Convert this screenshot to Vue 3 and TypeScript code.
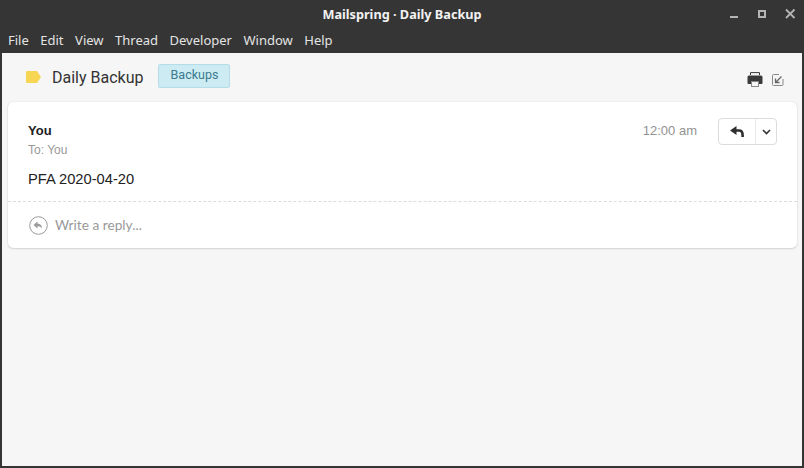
<script setup lang="ts">
const menus: string[] = ['File', 'Edit', 'View', 'Thread', 'Developer', 'Window', 'Help']
</script>

<template>
  <div class="window">
    <header class="titlebar">
      <span class="title">Mailspring · Daily Backup</span>
      <div class="controls">
        <svg width="12" height="12" viewBox="0 0 12 12"><rect x="1" y="8" width="8" height="2" fill="#b4b4b4" /></svg>
        <svg width="12" height="12" viewBox="0 0 12 12"><rect x="2" y="3" width="6" height="6" fill="none" stroke="#b4b4b4" stroke-width="2" /></svg>
        <svg width="12" height="12" viewBox="0 0 12 12"><path d="M1 1.500l8.500 8.500M9.500 1.500L1 10" stroke="#b4b4b4" stroke-width="1.800" fill="none" /></svg>
      </div>
    </header>
    <nav class="menubar">
      <span v-for="m in menus" :key="m" class="menu">{{ m }}</span>
    </nav>
    <main class="content">
      <div class="subject-row">
        <svg class="tag" width="15" height="12" viewBox="0 0 15 12"><path d="M1 0h10l4 6-4 6H1a1 1 0 0 1-1-1V1a1 1 0 0 1 1-1z" fill="#f7d654" /></svg>
        <span class="subject">Daily Backup</span>
        <span class="label">Backups</span>
        <div class="tools">
          <svg width="16" height="15" viewBox="0 0 16 15">
            <path d="M3.500 3V.6h9V3" fill="none" stroke="#3a3a3a" stroke-width="1" />
            <path d="M2 3.500h12a1.500 1.500 0 0 1 1.500 1.500v6a1 1 0 0 1-1 1H12V9H4v3H1.500a1 1 0 0 1-1-1V5A1.500 1.500 0 0 1 2 3.500z" fill="#3a3a3a" />
            <rect x="4.500" y="9.500" width="7" height="5" fill="#f6f6f6" stroke="#888" stroke-width="1" />
          </svg>
          <svg width="12" height="12" viewBox="0 0 12 12">
            <path d="M7 .5H1.500a1 1 0 0 0-1 1v9a1 1 0 0 0 1 1H10a1 1 0 0 0 1-1V5" fill="none" stroke="#888" stroke-width="1" />
            <path d="M9.500 2.500L3.800 8.200M3.500 4.500V8.500h4" fill="none" stroke="#666" stroke-width="1.300" />
          </svg>
        </div>
      </div>
      <section class="card">
        <div class="message">
          <div class="meta">
            <div>
              <div class="from">You</div>
              <div class="to">To: You</div>
            </div>
            <div class="right">
              <span class="time">12:00 am</span>
              <div class="reply-group">
                <button class="reply-main" type="button">
                  <svg width="14" height="12" viewBox="0 0 14 12">
                    <path d="M6.500 0L0 4.500 6.500 9z" fill="#2f2f2f" />
                    <path d="M5 4.500h4c2.500 0 3.600 1.500 3.600 4.500v2" fill="none" stroke="#2f2f2f" stroke-width="2.600" />
                  </svg>
                </button>
                <button class="reply-more" type="button">
                  <svg width="9" height="6" viewBox="0 0 9 6"><path d="M1 1l3.500 3.500L8 1" fill="none" stroke="#333" stroke-width="1.600" /></svg>
                </button>
              </div>
            </div>
          </div>
          <div class="body">PFA 2020-04-20</div>
        </div>
        <div class="composer">
          <svg width="19" height="19" viewBox="0 0 19 19">
            <circle cx="9.500" cy="9.500" r="8.800" fill="none" stroke="#9b9b9b" stroke-width="1" />
            <path d="M8.500 5.500L4.500 9 8.500 12.500V10.200c2 0 3.500.4 4.500 2.300.2-3-1.500-5-4.500-5.100z" fill="#9b9b9b" />
          </svg>
          <span class="placeholder">Write a reply...</span>
        </div>
      </section>
    </main>
  </div>
</template>

<style>
html, body { margin: 0; background: #353535; }
</style>

<style scoped>
.window {
  width: 804px;
  height: 468px;
  box-sizing: border-box;
  padding: 0 2px 2px;
  background: #353535;
  display: flex;
  flex-direction: column;
  overflow: hidden;
}
.titlebar {
  height: 28px;
  flex: none;
  display: flex;
  align-items: center;
  justify-content: center;
  position: relative;
}
.title {
  font: 700 12.700px "Noto Sans", sans-serif;
  color: #f2f2f2;
}
.controls {
  position: absolute;
  right: 5px;
  top: 8px;
  display: flex;
  gap: 16px;
}
.menubar {
  height: 25px;
  flex: none;
  display: flex;
  align-items: center;
  padding: 0 0 1px 6px;
  box-sizing: border-box;
  gap: 11.500px;
  font: 13px "Noto Sans", sans-serif;
  color: #e4e4e4;
}
.content {
  flex: 1;
  background: #f6f6f6;
  padding: 0 5px 0 6px;
  font-family: Roboto, sans-serif;
}
.subject-row {
  height: 49px;
  display: flex;
  align-items: center;
  padding: 0 0 1px 18px;
  box-sizing: border-box;
  color: #333;
}
.tag { margin-right: 11px; }
.subject { font: 16px Roboto, sans-serif; margin-right: 15px; }
.label {
  box-sizing: border-box;
  width: 72px;
  height: 24px;
  text-align: center;
  line-height: 20px;
  font-size: 12.500px;
  color: #3a7a8e;
  background: #cdebf2;
  border: 1px solid #b5dde8;
  border-radius: 2px;
  margin-top: -2px;
}
.tools {
  margin-left: auto;
  display: flex;
  align-items: center;
  gap: 9px;
  padding: 5px 13px 0 0;
}
.card {
  background: #fff;
  border-radius: 5px;
  box-shadow: 0 0 1px rgba(0, 0, 0, 0.2), 0 1px 2px rgba(0, 0, 0, 0.12);
}
.message {
  height: 100px;
  box-sizing: border-box;
  padding: 20px 20px 0;
  border-bottom: 1px dashed #dcdcdc;
}
.meta {
  display: flex;
  justify-content: space-between;
}
.from {
  font: 700 13px "Liberation Sans", sans-serif;
  color: #222;
  line-height: 17px;
}
.to {
  font: 12px "Liberation Sans", sans-serif;
  color: #999;
  line-height: 17px;
  margin-top: 3px;
}
.right {
  display: flex;
  align-items: flex-start;
  margin-top: -4px;
}
.time {
  font: 13px "Liberation Sans", sans-serif;
  color: #929292;
  margin: 5px 21px 0 0;
}
.reply-group {
  display: flex;
  height: 27px;
  box-sizing: border-box;
  border: 1px solid #dcdcdc;
  border-radius: 4px;
  background: #fff;
}
.reply-main, .reply-more {
  border: 0;
  padding: 0;
  background: none;
  display: flex;
  align-items: center;
  justify-content: center;
}
.reply-main { width: 37px; border-right: 1px solid #e8e8e8; }
.reply-more { width: 20px; }
.body {
  font: 14.700px "Liberation Sans", sans-serif;
  color: #222;
  margin-top: 12px;
}
.composer {
  height: 46px;
  display: flex;
  align-items: center;
  padding-left: 21px;
  gap: 7px;
}
.placeholder {
  font: 13.700px Lato, sans-serif;
  color: #999;
  margin-top: -1px;
}
</style>
